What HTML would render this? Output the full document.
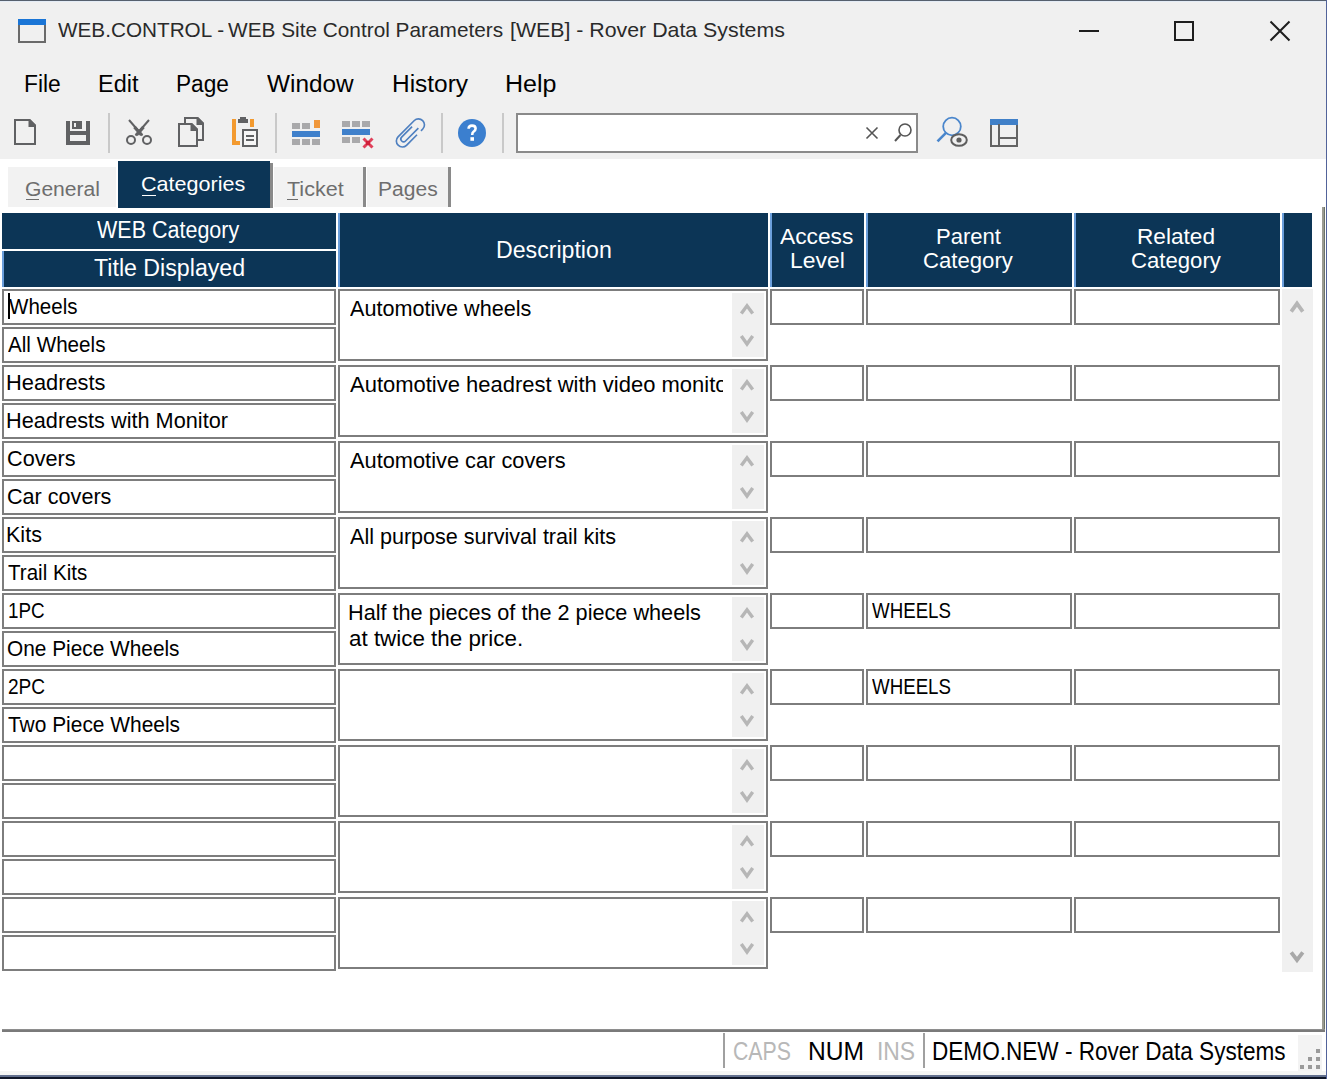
<!DOCTYPE html>
<html><head><meta charset="utf-8"><style>
*{margin:0;padding:0;box-sizing:border-box}
html,body{width:1327px;height:1079px;overflow:hidden;background:#fff;font-family:"Liberation Sans",sans-serif;color:#000}
.ab{position:absolute}
.t{position:absolute;white-space:pre;line-height:1;transform-origin:0 0}
.bx{position:absolute;border:2px solid #7d7d7d;background:#fff}
.hd{position:absolute;background:#0c3556}
.hl{position:absolute;background:#6b9fdc;width:2px}
svg{position:absolute;overflow:visible}
</style></head><body>

<div class="ab" style="left:0px;top:0px;width:1327px;height:159px;background:#f0f0f0;"></div>
<div class="ab" style="left:0px;top:0px;width:1327px;height:1px;background:#56606e;"></div>
<div class="ab" style="left:0px;top:1px;width:1326px;height:1px;background:#e4ecf6;"></div>
<div class="ab" style="left:18px;top:19px;width:28px;height:6px;background:#1a75d6;"></div>
<div class="ab" style="left:18px;top:25px;width:2px;height:18px;background:#6a6a6a;"></div>
<div class="ab" style="left:44px;top:25px;width:2px;height:18px;background:#6a6a6a;"></div>
<div class="ab" style="left:18px;top:41px;width:28px;height:2px;background:#6a6a6a;"></div>
<div class="t" style="left:57.80px;top:20.46px;font-size:20.87px;color:#2a2a2a;transform:scaleX(0.9932)">WEB.CONTROL -</div>
<div class="t" style="left:228.00px;top:20.46px;font-size:20.87px;color:#2a2a2a;transform:scaleX(0.9972)">WEB Site Control Parameters</div>
<div class="t" style="left:510.01px;top:20.46px;font-size:20.87px;color:#2a2a2a;transform:scaleX(1.0220)">[WEB] - Rover Data Systems</div>
<div class="ab" style="left:1079px;top:30px;width:20px;height:2px;background:#1e1e1e;"></div>
<div class="ab" style="left:1174px;top:21px;width:20px;height:20px;border:2px solid #1e1e1e"></div>
<svg style="left:0;top:0" width="1" height="1"><path d="M1270.5 21.5L1289.5 40.5M1289.5 21.5L1270.5 40.5" stroke="#1e1e1e" stroke-width="2"/></svg>
<div class="t" style="left:24.17px;top:72.20px;font-size:23.77px;color:#000;transform:scaleX(0.9601)">File</div>
<div class="t" style="left:97.62px;top:72.20px;font-size:23.77px;color:#000;transform:scaleX(0.9877)">Edit</div>
<div class="t" style="left:176.09px;top:72.20px;font-size:23.77px;color:#000;transform:scaleX(0.9538)">Page</div>
<div class="t" style="left:267.00px;top:72.20px;font-size:23.77px;color:#000;transform:scaleX(1.0246)">Window</div>
<div class="t" style="left:391.54px;top:72.20px;font-size:23.77px;color:#000;transform:scaleX(1.0289)">History</div>
<div class="t" style="left:505.00px;top:72.20px;font-size:23.77px;color:#000;transform:scaleX(1.0540)">Help</div>
<svg style="left:0;top:0" width="1" height="1"><path d="M15 120H29.5L35 125.5V144H15Z" fill="none" stroke="#606163" stroke-width="2"/><path d="M28.5 119H30L36 125V127H28.5Z" fill="#606163"/><path d="M66 121H70V131H86V121H90V145H66Z M70 135V141H86V135Z" fill="#606163" fill-rule="evenodd"/><path d="M72 121H82V129H72Z M74 123V127H76V123Z" fill="#606163" fill-rule="evenodd"/><rect x="108" y="113" width="2" height="40" fill="#c9c9c9"/><rect x="275" y="113" width="2" height="40" fill="#c9c9c9"/><rect x="441" y="113" width="2" height="40" fill="#c9c9c9"/><rect x="502" y="113" width="2" height="40" fill="#c9c9c9"/><path d="M129 120L142.5 135.5M149 120L135.5 135.5" stroke="#606163" stroke-width="2"/><path d="M134.5 127L141.5 135M143.5 127L136.5 135" stroke="#606163" stroke-width="3.4"/><circle cx="131" cy="140" r="4" fill="none" stroke="#606163" stroke-width="2"/><circle cx="147" cy="140" r="4" fill="none" stroke="#606163" stroke-width="2"/><path d="M185 123V118H197.5L203 123.5V140H197" fill="none" stroke="#606163" stroke-width="2"/><path d="M196.5 117H198L204 123V125H196.5Z" fill="#606163"/><path d="M179 124H191.5L197 129.5V146H179Z" fill="none" stroke="#606163" stroke-width="2"/><path d="M190.5 123H192L198 129V131H190.5Z" fill="#606163"/><path d="M232 119H236V141H240V145H232Z" fill="#f39a2f"/><rect x="250" y="119" width="4" height="8" fill="#f39a2f"/><path d="M238 123V119H240V117H246V119H248V123Z" fill="#606163"/><rect x="243" y="130" width="14" height="16" fill="#f6f6f6" stroke="#606163" stroke-width="2"/><rect x="246" y="135" width="8" height="2" fill="#606163"/><rect x="246" y="139" width="8" height="2" fill="#606163"/><rect x="292" y="123" width="8" height="6" fill="#a9a9ab"/><rect x="302" y="123" width="8" height="6" fill="#a9a9ab"/><rect x="314" y="120" width="6" height="8" fill="#f0973a"/><rect x="292" y="131" width="28" height="6" fill="#3f80cb"/><rect x="292" y="139" width="8" height="6" fill="#a9a9ab"/><rect x="302" y="139" width="8" height="6" fill="#a9a9ab"/><rect x="312" y="139" width="8" height="6" fill="#a9a9ab"/><rect x="342" y="121" width="8" height="6" fill="#a9a9ab"/><rect x="352" y="121" width="8" height="6" fill="#a9a9ab"/><rect x="362" y="121" width="8" height="6" fill="#a9a9ab"/><rect x="342" y="129" width="28" height="6" fill="#3f80cb"/><rect x="342" y="137" width="8" height="6" fill="#a9a9ab"/><rect x="352" y="137" width="8" height="6" fill="#a9a9ab"/><path d="M363.5 138.5L372.5 147.5M372.5 138.5L363.5 147.5" stroke="#e0405a" stroke-width="3"/><rect x="366" y="141" width="4" height="4" fill="#d0203a"/><g transform="translate(410 132.5) rotate(-45) scale(1.12 1.15) translate(-410 -132.5)" fill="none" stroke="#4f80c0" stroke-width="1.45"><path d="M413 138.2H399.7A5.2 5.2 0 0 1 399.7 127.8H420.3A5.2 5.2 0 0 1 420.3 138.2H418"/><path d="M418 135H401.8A2.4 2.4 0 0 1 401.8 130.2H415"/></g><circle cx="472" cy="133" r="14" fill="#3b7fcf"/><path d="M468.6 128.8Q468.6 125.6 472 125.6Q475.6 125.6 475.6 128.6Q475.6 130.6 473.6 131.6Q472.2 132.4 472.2 135" fill="none" stroke="#fff" stroke-width="2.6"/><rect x="470.4" y="137.2" width="3.6" height="3.6" fill="#fff"/><rect x="517" y="114" width="400" height="38" fill="#fff" stroke="#8a8a8a" stroke-width="2"/><path d="M866.5 127.5L877.5 138.5M877.5 127.5L866.5 138.5" stroke="#555" stroke-width="1.6"/><circle cx="905" cy="130" r="6" fill="none" stroke="#555" stroke-width="1.6"/><path d="M900.5 135L895 141" stroke="#555" stroke-width="2"/><circle cx="952" cy="126.5" r="8.8" fill="none" stroke="#4a86cc" stroke-width="1.8"/><path d="M946.2 132.6L937.5 141.3" stroke="#4a86cc" stroke-width="2.6"/><ellipse cx="959" cy="140" rx="7.8" ry="5.8" fill="#f0f0f0" stroke="#5e5e5e" stroke-width="2"/><circle cx="959" cy="140" r="2.6" fill="#5e5e5e"/><rect x="991" y="120" width="26" height="26" fill="none" stroke="#646464" stroke-width="2"/><rect x="990" y="119" width="28" height="6" fill="#4080c8"/><rect x="998" y="124" width="2" height="22" fill="#646464"/><rect x="999" y="137" width="18" height="2" fill="#646464"/></svg>
<div class="ab" style="left:8px;top:167px;width:108px;height:40px;background:#f2f2f2;"></div>
<div class="t" style="left:24.95px;top:178.61px;font-size:20.58px;color:#6e6e6e;transform:scaleX(1.0241)">General</div>
<div class="ab" style="left:25.5px;top:198.5px;width:13px;height:1.6px;background:#6e6e6e;"></div>
<div class="ab" style="left:118px;top:161px;width:152px;height:47px;background:#0c3556;"></div>
<div class="ab" style="left:270px;top:163px;width:3px;height:45px;background:#8a8a8a;"></div>
<div class="t" style="left:141.12px;top:174.46px;font-size:20.87px;color:#ffffff;transform:scaleX(1.0340)">Categories</div>
<div class="ab" style="left:141.5px;top:194.5px;width:14px;height:1.6px;background:#ffffff;"></div>
<div class="ab" style="left:274px;top:167px;width:89px;height:40px;background:#f2f2f2;"></div>
<div class="ab" style="left:363px;top:167px;width:3px;height:40px;background:#8a8a8a;"></div>
<div class="t" style="left:286.57px;top:178.61px;font-size:20.58px;color:#6e6e6e;transform:scaleX(1.0466)">Ticket</div>
<div class="ab" style="left:286.5px;top:198.5px;width:11px;height:1.6px;background:#6e6e6e;"></div>
<div class="ab" style="left:367px;top:167px;width:81px;height:40px;background:#f2f2f2;"></div>
<div class="ab" style="left:448px;top:167px;width:3px;height:40px;background:#8a8a8a;"></div>
<div class="t" style="left:377.81px;top:178.61px;font-size:20.58px;color:#6e6e6e;transform:scaleX(1.0236)">Pages</div>
<div class="ab" style="left:2px;top:213px;width:334px;height:36px;background:#0c3556;"></div>
<div class="ab" style="left:2px;top:251px;width:334px;height:36px;background:#0c3556;"></div>
<div class="ab" style="left:2px;top:251px;width:2px;height:36px;background:#6b9fdc;"></div>
<div class="t" style="left:97.20px;top:218.77px;font-size:23.33px;color:#fff;transform:scaleX(0.9220)">WEB Category</div>
<div class="t" style="left:94.14px;top:256.57px;font-size:23.33px;color:#fff;transform:scaleX(0.9936)">Title Displayed</div>
<div class="ab" style="left:338px;top:213px;width:430px;height:74px;background:#0c3556;"></div>
<div class="ab" style="left:338px;top:213px;width:2px;height:74px;background:#6b9fdc;"></div>
<div class="ab" style="left:770px;top:213px;width:94px;height:74px;background:#0c3556;"></div>
<div class="ab" style="left:770px;top:213px;width:2px;height:74px;background:#6b9fdc;"></div>
<div class="ab" style="left:866px;top:213px;width:206px;height:74px;background:#0c3556;"></div>
<div class="ab" style="left:866px;top:213px;width:2px;height:74px;background:#6b9fdc;"></div>
<div class="ab" style="left:1074px;top:213px;width:206px;height:74px;background:#0c3556;"></div>
<div class="ab" style="left:1074px;top:213px;width:2px;height:74px;background:#6b9fdc;"></div>
<div class="ab" style="left:1282px;top:213px;width:30px;height:74px;background:#0c3556;"></div>
<div class="ab" style="left:1282px;top:213px;width:2px;height:74px;background:#6b9fdc;"></div>
<div class="t" style="left:495.65px;top:237.78px;font-size:24.49px;color:#fff;transform:scaleX(0.9451)">Description</div>
<div class="t" style="left:780.40px;top:224.86px;font-size:22.75px;color:#fff;transform:scaleX(1.0002)">Access</div>
<div class="t" style="left:789.67px;top:249.06px;font-size:22.75px;color:#fff;transform:scaleX(1.0065)">Level</div>
<div class="t" style="left:935.63px;top:224.86px;font-size:22.75px;color:#fff;transform:scaleX(0.9696)">Parent</div>
<div class="t" style="left:922.89px;top:249.06px;font-size:22.75px;color:#fff;transform:scaleX(0.9735)">Category</div>
<div class="t" style="left:1137.19px;top:224.86px;font-size:22.75px;color:#fff;transform:scaleX(0.9948)">Related</div>
<div class="t" style="left:1130.89px;top:249.06px;font-size:22.75px;color:#fff;transform:scaleX(0.9735)">Category</div>
<div class="bx" style="left:2px;top:289px;width:334px;height:36px"></div>
<div class="bx" style="left:2px;top:327px;width:334px;height:36px"></div>
<div class="bx" style="left:338px;top:289px;width:430px;height:72px"></div>
<div class="ab" style="left:732px;top:293px;width:32px;height:64px;background:#f0f0f0;"></div>
<div class="bx" style="left:770px;top:289px;width:94px;height:36px"></div>
<div class="bx" style="left:866px;top:289px;width:206px;height:36px"></div>
<div class="bx" style="left:1074px;top:289px;width:206px;height:36px"></div>
<div class="bx" style="left:2px;top:365px;width:334px;height:36px"></div>
<div class="bx" style="left:2px;top:403px;width:334px;height:36px"></div>
<div class="bx" style="left:338px;top:365px;width:430px;height:72px"></div>
<div class="ab" style="left:732px;top:369px;width:32px;height:64px;background:#f0f0f0;"></div>
<div class="bx" style="left:770px;top:365px;width:94px;height:36px"></div>
<div class="bx" style="left:866px;top:365px;width:206px;height:36px"></div>
<div class="bx" style="left:1074px;top:365px;width:206px;height:36px"></div>
<div class="bx" style="left:2px;top:441px;width:334px;height:36px"></div>
<div class="bx" style="left:2px;top:479px;width:334px;height:36px"></div>
<div class="bx" style="left:338px;top:441px;width:430px;height:72px"></div>
<div class="ab" style="left:732px;top:445px;width:32px;height:64px;background:#f0f0f0;"></div>
<div class="bx" style="left:770px;top:441px;width:94px;height:36px"></div>
<div class="bx" style="left:866px;top:441px;width:206px;height:36px"></div>
<div class="bx" style="left:1074px;top:441px;width:206px;height:36px"></div>
<div class="bx" style="left:2px;top:517px;width:334px;height:36px"></div>
<div class="bx" style="left:2px;top:555px;width:334px;height:36px"></div>
<div class="bx" style="left:338px;top:517px;width:430px;height:72px"></div>
<div class="ab" style="left:732px;top:521px;width:32px;height:64px;background:#f0f0f0;"></div>
<div class="bx" style="left:770px;top:517px;width:94px;height:36px"></div>
<div class="bx" style="left:866px;top:517px;width:206px;height:36px"></div>
<div class="bx" style="left:1074px;top:517px;width:206px;height:36px"></div>
<div class="bx" style="left:2px;top:593px;width:334px;height:36px"></div>
<div class="bx" style="left:2px;top:631px;width:334px;height:36px"></div>
<div class="bx" style="left:338px;top:593px;width:430px;height:72px"></div>
<div class="ab" style="left:732px;top:597px;width:32px;height:64px;background:#f0f0f0;"></div>
<div class="bx" style="left:770px;top:593px;width:94px;height:36px"></div>
<div class="bx" style="left:866px;top:593px;width:206px;height:36px"></div>
<div class="bx" style="left:1074px;top:593px;width:206px;height:36px"></div>
<div class="bx" style="left:2px;top:669px;width:334px;height:36px"></div>
<div class="bx" style="left:2px;top:707px;width:334px;height:36px"></div>
<div class="bx" style="left:338px;top:669px;width:430px;height:72px"></div>
<div class="ab" style="left:732px;top:673px;width:32px;height:64px;background:#f0f0f0;"></div>
<div class="bx" style="left:770px;top:669px;width:94px;height:36px"></div>
<div class="bx" style="left:866px;top:669px;width:206px;height:36px"></div>
<div class="bx" style="left:1074px;top:669px;width:206px;height:36px"></div>
<div class="bx" style="left:2px;top:745px;width:334px;height:36px"></div>
<div class="bx" style="left:2px;top:783px;width:334px;height:36px"></div>
<div class="bx" style="left:338px;top:745px;width:430px;height:72px"></div>
<div class="ab" style="left:732px;top:749px;width:32px;height:64px;background:#f0f0f0;"></div>
<div class="bx" style="left:770px;top:745px;width:94px;height:36px"></div>
<div class="bx" style="left:866px;top:745px;width:206px;height:36px"></div>
<div class="bx" style="left:1074px;top:745px;width:206px;height:36px"></div>
<div class="bx" style="left:2px;top:821px;width:334px;height:36px"></div>
<div class="bx" style="left:2px;top:859px;width:334px;height:36px"></div>
<div class="bx" style="left:338px;top:821px;width:430px;height:72px"></div>
<div class="ab" style="left:732px;top:825px;width:32px;height:64px;background:#f0f0f0;"></div>
<div class="bx" style="left:770px;top:821px;width:94px;height:36px"></div>
<div class="bx" style="left:866px;top:821px;width:206px;height:36px"></div>
<div class="bx" style="left:1074px;top:821px;width:206px;height:36px"></div>
<div class="bx" style="left:2px;top:897px;width:334px;height:36px"></div>
<div class="bx" style="left:2px;top:935px;width:334px;height:36px"></div>
<div class="bx" style="left:338px;top:897px;width:430px;height:72px"></div>
<div class="ab" style="left:732px;top:901px;width:32px;height:64px;background:#f0f0f0;"></div>
<div class="bx" style="left:770px;top:897px;width:94px;height:36px"></div>
<div class="bx" style="left:866px;top:897px;width:206px;height:36px"></div>
<div class="bx" style="left:1074px;top:897px;width:206px;height:36px"></div>
<svg style="left:0;top:0" width="1" height="1"><path d="M741.3 313.6 L747 305.8 L752.7 313.6" fill="none" stroke="#b6b6b6" stroke-width="3.4"/><path d="M741.3 336 L747 344 L752.7 336" fill="none" stroke="#b6b6b6" stroke-width="3.4"/><path d="M741.3 389.6 L747 381.8 L752.7 389.6" fill="none" stroke="#b6b6b6" stroke-width="3.4"/><path d="M741.3 412 L747 420 L752.7 412" fill="none" stroke="#b6b6b6" stroke-width="3.4"/><path d="M741.3 465.6 L747 457.8 L752.7 465.6" fill="none" stroke="#b6b6b6" stroke-width="3.4"/><path d="M741.3 488 L747 496 L752.7 488" fill="none" stroke="#b6b6b6" stroke-width="3.4"/><path d="M741.3 541.6 L747 533.8 L752.7 541.6" fill="none" stroke="#b6b6b6" stroke-width="3.4"/><path d="M741.3 564 L747 572 L752.7 564" fill="none" stroke="#b6b6b6" stroke-width="3.4"/><path d="M741.3 617.6 L747 609.8 L752.7 617.6" fill="none" stroke="#b6b6b6" stroke-width="3.4"/><path d="M741.3 640 L747 648 L752.7 640" fill="none" stroke="#b6b6b6" stroke-width="3.4"/><path d="M741.3 693.6 L747 685.8 L752.7 693.6" fill="none" stroke="#b6b6b6" stroke-width="3.4"/><path d="M741.3 716 L747 724 L752.7 716" fill="none" stroke="#b6b6b6" stroke-width="3.4"/><path d="M741.3 769.6 L747 761.8 L752.7 769.6" fill="none" stroke="#b6b6b6" stroke-width="3.4"/><path d="M741.3 792 L747 800 L752.7 792" fill="none" stroke="#b6b6b6" stroke-width="3.4"/><path d="M741.3 845.6 L747 837.8 L752.7 845.6" fill="none" stroke="#b6b6b6" stroke-width="3.4"/><path d="M741.3 868 L747 876 L752.7 868" fill="none" stroke="#b6b6b6" stroke-width="3.4"/><path d="M741.3 921.6 L747 913.8 L752.7 921.6" fill="none" stroke="#b6b6b6" stroke-width="3.4"/><path d="M741.3 944 L747 952 L752.7 944" fill="none" stroke="#b6b6b6" stroke-width="3.4"/></svg>
<div class="t" style="left:8.60px;top:295.60px;font-size:21.88px;color:#000;transform:scaleX(0.9388)">Wheels</div>
<div class="t" style="left:8.10px;top:333.60px;font-size:21.88px;color:#000;transform:scaleX(0.9431)">All Wheels</div>
<div class="t" style="left:350.00px;top:297.98px;font-size:22.03px;color:#000;transform:scaleX(0.9812)">Automotive wheels</div>
<div class="t" style="left:5.55px;top:371.60px;font-size:21.88px;color:#000;transform:scaleX(0.9983)">Headrests</div>
<div class="t" style="left:5.56px;top:409.60px;font-size:21.88px;color:#000;transform:scaleX(0.9924)">Headrests with Monitor</div>
<div class="ab" style="left:340px;top:0;width:383px;height:1079px;overflow:hidden"><div class="ab" style="left:-340px;top:0"><div class="t" style="left:349.60px;top:373.98px;font-size:22.03px;color:#000;transform:scaleX(0.9982)">Automotive headrest with video monito</div></div></div>
<div class="t" style="left:6.82px;top:447.60px;font-size:21.88px;color:#000;transform:scaleX(0.9896)">Covers</div>
<div class="t" style="left:6.82px;top:485.60px;font-size:21.88px;color:#000;transform:scaleX(0.9870)">Car covers</div>
<div class="t" style="left:349.60px;top:449.98px;font-size:22.03px;color:#000;transform:scaleX(0.9898)">Automotive car covers</div>
<div class="t" style="left:5.58px;top:523.60px;font-size:21.88px;color:#000;transform:scaleX(0.9847)">Kits</div>
<div class="t" style="left:7.89px;top:561.60px;font-size:21.88px;color:#000;transform:scaleX(0.9404)">Trail Kits</div>
<div class="t" style="left:349.60px;top:525.98px;font-size:22.03px;color:#000;transform:scaleX(0.9791)">All purpose survival trail kits</div>
<div class="t" style="left:8.49px;top:599.60px;font-size:21.88px;color:#000;transform:scaleX(0.8612)">1PC</div>
<div class="t" style="left:7.06px;top:637.60px;font-size:21.88px;color:#000;transform:scaleX(0.9524)">One Piece Wheels</div>
<div class="t" style="left:347.97px;top:601.98px;font-size:22.03px;color:#000;transform:scaleX(0.9840)">Half the pieces of the 2 piece wheels</div>
<div class="t" style="left:348.70px;top:627.98px;font-size:22.03px;color:#000;transform:scaleX(1.0165)">at twice the price.</div>
<div class="t" style="left:871.80px;top:600.12px;font-size:21.74px;color:#000;transform:scaleX(0.8606)">WHEELS</div>
<div class="t" style="left:8.05px;top:675.60px;font-size:21.88px;color:#000;transform:scaleX(0.8719)">2PC</div>
<div class="t" style="left:7.68px;top:713.60px;font-size:21.88px;color:#000;transform:scaleX(0.9559)">Two Piece Wheels</div>
<div class="t" style="left:871.80px;top:676.12px;font-size:21.74px;color:#000;transform:scaleX(0.8606)">WHEELS</div>
<div class="ab" style="left:8px;top:293px;width:2px;height:26px;background:#000;"></div>
<div class="ab" style="left:1282px;top:289px;width:31px;height:683px;background:#f0f0f0;"></div>
<svg style="left:0;top:0" width="1" height="1"><path d="M1291.2 311.6L1297 303.6L1302.8 311.6" fill="none" stroke="#b6b6b6" stroke-width="3.8"/><path d="M1291.2 952.3L1297 960L1302.8 952.3" fill="none" stroke="#a8a8a8" stroke-width="3.8"/></svg>
<div class="ab" style="left:1322px;top:207px;width:3px;height:825px;background:#9b9b92;"></div>
<div class="ab" style="left:1324px;top:207px;width:1px;height:825px;background:#6d7468;"></div>
<div class="ab" style="left:2px;top:1029px;width:1323px;height:1px;background:#8e8e8e;"></div>
<div class="ab" style="left:2px;top:1030px;width:1323px;height:2px;background:#7a7a7a;"></div>
<div class="ab" style="left:723px;top:1033px;width:2px;height:35px;background:#a0a0a0;"></div>
<div class="ab" style="left:923px;top:1033px;width:2px;height:35px;background:#a0a0a0;"></div>
<div class="t" style="left:732.94px;top:1039.15px;font-size:25.94px;color:#b8b8b8;transform:scaleX(0.8208)">CAPS</div>
<div class="t" style="left:808.03px;top:1039.15px;font-size:25.94px;color:#000;transform:scaleX(0.9491)">NUM</div>
<div class="t" style="left:876.94px;top:1039.15px;font-size:25.94px;color:#b8b8b8;transform:scaleX(0.8818)">INS</div>
<div class="t" style="left:932.19px;top:1039.15px;font-size:25.94px;color:#000;transform:scaleX(0.8701)">DEMO.NEW - Rover Data Systems</div>
<div class="ab" style="left:1298px;top:1035px;width:24px;height:38px;background:#f3f3f3;"></div>
<div class="ab" style="left:1316px;top:1049px;width:4px;height:4px;background:#9a9a9a;"></div>
<div class="ab" style="left:1308px;top:1057px;width:4px;height:4px;background:#9a9a9a;"></div>
<div class="ab" style="left:1316px;top:1057px;width:4px;height:4px;background:#9a9a9a;"></div>
<div class="ab" style="left:1300px;top:1065px;width:4px;height:4px;background:#9a9a9a;"></div>
<div class="ab" style="left:1308px;top:1065px;width:4px;height:4px;background:#9a9a9a;"></div>
<div class="ab" style="left:1316px;top:1065px;width:4px;height:4px;background:#9a9a9a;"></div>
<div class="ab" style="left:0px;top:1071px;width:1326px;height:4px;background:#f4f5f4;"></div>
<div class="ab" style="left:0px;top:1075px;width:1327px;height:2px;background:#62708e;"></div>
<div class="ab" style="left:0px;top:1077px;width:1327px;height:2px;background:#0e1628;"></div>
<div class="ab" style="left:1326px;top:0px;width:1px;height:1079px;background:#52639a;"></div>
</body></html>
